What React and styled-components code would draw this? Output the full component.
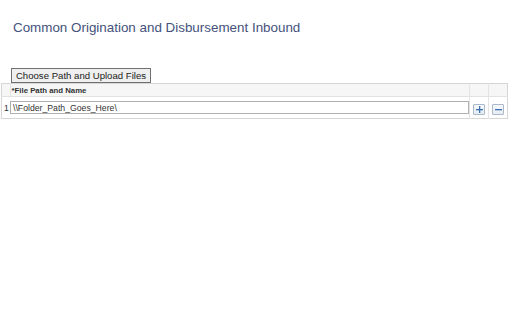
import React from "react";
import styled, { createGlobalStyle } from "styled-components";

const GlobalStyle = createGlobalStyle`
  html, body {
    margin: 0;
    padding: 0;
    background: #ffffff;
    font-family: "Liberation Sans", Arial, sans-serif;
  }
`;

const Page = styled.div`
  padding: 0 4px 0 1px;
  width: 507px;
`;

const Title = styled.h1`
  margin: 20px 0 0 12px;
  font-size: 13.4px;
  line-height: 16px;
  font-weight: normal;
  color: #44527c;
`;

const UploadButton = styled.button`
  display: block;
  margin: 32px 0 0 10px;
  height: 15px;
  width: 140px;
  padding: 0;
  font-family: "Liberation Sans", Arial, sans-serif;
  font-size: 9.6px;
  line-height: 13px;
  color: #222;
  background: #efefef;
  border: 1px solid #707070;
  border-radius: 0;
`;

const Grid = styled.table`
  width: 507px;
  border-collapse: collapse;
  border: 1px solid #d6d6d6;
  box-shadow: 0 1px 1px rgba(0, 0, 0, 0.06);
`;

const HeadCell = styled.th`
  height: 12px;
  padding: 0 0 0 ${(p) => p.$pad || 0}px;
  text-align: left;
  font-size: 7.8px;
  font-weight: bold;
  color: #333;
  background: #f6f6f6;
  border-bottom: 1px solid #e2e2e2;
  border-left: ${(p) => (p.$divider ? "1px solid #e4e4e4" : "none")};
  width: ${(p) => p.$width || "auto"};
`;

const Cell = styled.td`
  height: 21px;
  padding: 0 0 0 ${(p) => p.$pad || 0}px;
  text-align: ${(p) => p.$align || "left"};
  vertical-align: middle;
  border-left: ${(p) => (p.$divider ? "1px solid #e4e4e4" : "none")};
  background: #fff;
`;

const RowNum = styled.td`
  width: 6px;
  padding: 0 0 0 2px;
  font-size: 8.6px;
  color: #333;
  vertical-align: middle;
`;

const PathInput = styled.input`
  display: block;
  box-sizing: border-box;
  width: 459px;
  height: 13px;
  padding: 0 0 0 2px;
  font-family: "Liberation Sans", Arial, sans-serif;
  font-size: 8.7px;
  color: #333;
  border: 1px solid #b0b0b0;
  border-radius: 0;
  outline: none;
`;

const IconButton = styled.button`
  display: inline-flex;
  align-items: center;
  justify-content: center;
  width: 12px;
  height: 11px;
  padding: 0;
  border: 1px solid #a9b9ca;
  border-radius: 1px;
  background: linear-gradient(#f7f9fc, #e6ecf2);
`;

const PlusIcon = () => (
  <svg width="7" height="7" viewBox="0 0 7 7">
    <rect x="3" y="0" width="1.3" height="7" fill="#3a6fb5" />
    <rect x="0" y="3" width="7" height="1.3" fill="#3a6fb5" />
  </svg>
);

const MinusIcon = () => (
  <svg width="7" height="7" viewBox="0 0 7 7">
    <rect x="0" y="3" width="7" height="1.3" fill="#3a6fb5" />
  </svg>
);

const App = () => {
  return (
    <Page>
      <GlobalStyle />
      <Title>Common Origination and Disbursement Inbound</Title>
      <UploadButton>Choose Path and Upload Files</UploadButton>
      <Grid>
        <thead>
          <tr>
            <HeadCell $width="6px"></HeadCell>
            <HeadCell $divider $pad={1}>*File Path and Name</HeadCell>
            <HeadCell $divider $width="18px"></HeadCell>
            <HeadCell $divider $width="18px"></HeadCell>
          </tr>
        </thead>
        <tbody>
          <tr>
            <RowNum>1</RowNum>
            <Cell $pad={0}>
              <PathInput defaultValue="\\Folder_Path_Goes_Here\" />
            </Cell>
            <Cell $divider $align="center">
              <IconButton aria-label="Add row">
                <PlusIcon />
              </IconButton>
            </Cell>
            <Cell $divider $align="center">
              <IconButton aria-label="Delete row">
                <MinusIcon />
              </IconButton>
            </Cell>
          </tr>
        </tbody>
      </Grid>
    </Page>
  );
};

export default App;
